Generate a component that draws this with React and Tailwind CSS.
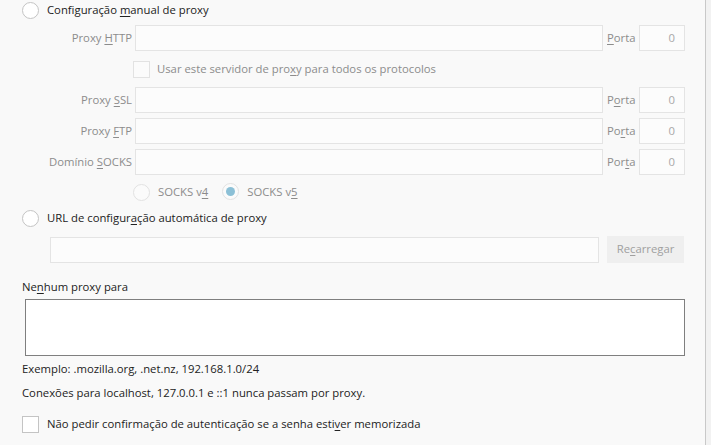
import React from "react";

const font = { fontFamily: '"Open Sans", "Noto Sans", sans-serif' };

function Radio({ checked, disabled }) {
  return (
    <span
      className={`inline-flex items-center justify-center w-[17px] h-[17px] rounded-full border shrink-0 ${
        disabled ? "border-[#e2e2e2] bg-[#fbfbfb]" : "border-[#c4c4c4] bg-white"
      }`}
    >
      {checked && <span className="w-[9px] h-[9px] rounded-full bg-[#8cc0d6]" />}
    </span>
  );
}

function Checkbox({ disabled }) {
  return (
    <span
      className={`inline-block w-[17px] h-[17px] border shrink-0 ${
        disabled ? "border-[#e2e2e2] bg-[#fbfbfb]" : "border-[#c4c4c4] bg-white"
      }`}
    />
  );
}

function U({ children }) {
  return <span className="underline underline-offset-2">{children}</span>;
}

function ProxyRow({ label, porta }) {
  return (
    <div className="flex items-center h-[26px]">
      <div className="w-[132px] text-right text-[#8c8c8c] whitespace-nowrap">{label}</div>
      <div className="ml-[3px] w-[468px] h-full border border-[#e4e4e4] bg-[#fcfcfc]" />
      <div className="ml-[4px] w-[32px] text-[#8c8c8c]">{porta}</div>
      <div className="w-[46px] h-full border border-[#e4e4e4] bg-[#fcfcfc] flex items-center justify-end pr-[9px] text-[#a8a8a8]">
        0
      </div>
    </div>
  );
}

export default function App() {
  return (
    <div className="flex w-[711px] h-[445px] bg-[#f9f9f9] text-[11.3px] overflow-hidden" style={font}>
      <div className="w-[705px] pt-[1px] pl-[22px] text-[#222]">
        {/* Manual proxy */}
        <div className="flex items-center gap-[8px] h-[18px]">
          <Radio />
          <span>
            Configuração <U>m</U>anual de proxy
          </span>
        </div>

        <div className="mt-[6px] -ml-[22px]">
          <ProxyRow
            label={
              <>
                Proxy <U>H</U>TTP
              </>
            }
            porta={
              <>
                <U>P</U>orta
              </>
            }
          />
          <div className="flex items-center gap-[7px] ml-[133px] mt-[10px] h-[17px] text-[#8c8c8c]">
            <Checkbox disabled />
            <span>
              Usar este servidor de pro<U>x</U>y para todos os protocolos
            </span>
          </div>
          <div className="flex flex-col gap-[5px] mt-[9px]">
            <ProxyRow
              label={
                <>
                  Proxy <U>S</U>SL
                </>
              }
              porta={
                <>
                  P<U>o</U>rta
                </>
              }
            />
            <ProxyRow
              label={
                <>
                  Proxy <U>F</U>TP
                </>
              }
              porta={
                <>
                  Po<U>r</U>ta
                </>
              }
            />
            <ProxyRow
              label={
                <>
                  Domínio <U>S</U>OCKS
                </>
              }
              porta={
                <>
                  Por<U>t</U>a
                </>
              }
            />
          </div>
          <div className="flex items-center ml-[133px] mt-[8px] h-[18px] text-[#8c8c8c]">
            <Radio disabled />
            <span className="ml-[8px]">
              SOCKS v<U>4</U>
            </span>
            <span className="ml-[14px]">
              <Radio checked disabled />
            </span>
            <span className="ml-[8px]">
              SOCKS v<U>5</U>
            </span>
          </div>
        </div>

        {/* Auto config */}
        <div className="flex items-center gap-[8px] h-[18px] mt-[8px]">
          <Radio />
          <span>
            URL de configur<U>a</U>ção automática de proxy
          </span>
        </div>
        <div className="flex items-center mt-[9px] ml-[28px] h-[27px]">
          <div className="w-[549px] h-[26px] border border-[#e4e4e4] bg-[#fcfcfc]" />
          <div className="ml-[8px] w-[77px] h-[27px] bg-[#efefef] flex items-center justify-center text-[#a0a0a0]">
            Re<U>c</U>arregar
          </div>
        </div>

        {/* No proxy for */}
        <div className="mt-[15px] h-[18px] flex items-center">
          <span>
            Ne<U>n</U>hum proxy para
          </span>
        </div>
        <div className="mt-[3px] ml-[3px] w-[660px] h-[57px] border border-[#7f7f7f] bg-white" />
        <div className="mt-[4px] h-[18px] flex items-center">
          Exemplo: .mozilla.org, .net.nz, 192.168.1.0/24
        </div>
        <div className="mt-[6px] h-[18px] flex items-center">
          Conexões para localhost, 127.0.0.1 e ::1 nunca passam por proxy.
        </div>
        <div className="mt-[13px] flex items-center gap-[8px] h-[18px]">
          <Checkbox />
          <span>
            Não pedir confirmação de autenticação se a senha esti<U>v</U>er memorizada
          </span>
        </div>
      </div>
      <div className="flex-1 border-l border-[#c9c9c9] bg-[#f2f2f2]" />
    </div>
  );
}
